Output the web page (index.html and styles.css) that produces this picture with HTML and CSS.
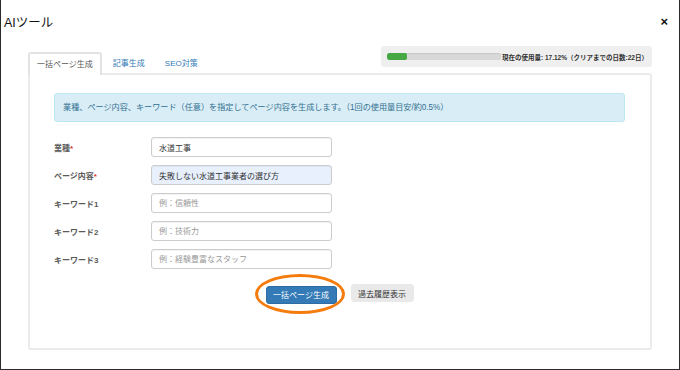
FILE: index.html
```html
<!DOCTYPE html>
<html lang="ja">
<head>
<meta charset="utf-8">
<title>AIツール</title>
<link rel="stylesheet" href="styles.css">
</head>
<body>
<div class="window">
  <div class="header">
    <div class="title">AIツール</div>
    <div class="close">×</div>
  </div>
  <div class="body">
    <div class="tabbar">
      <div class="tabs">
        <div class="tab active">一括ページ生成</div>
        <div class="tab">記事生成</div>
        <div class="tab">SEO対策</div>
      </div>
      <div class="usage">
        <div class="bar"><div class="fill" style="width:17.12%"></div></div>
        <div class="usage-text">現在の使用量: 17.12%（クリアまでの日数:22日）</div>
      </div>
    </div>
    <div class="panel">
      <div class="alert">業種、ページ内容、キーワード（任意）を指定してページ内容を生成します。（1回の使用量目安/約0.5%）</div>
      <div class="form">
        <label class="label">業種<span class="req">*</span></label>
        <input class="input" type="text" value="水道工事">
        <label class="label">ページ内容<span class="req">*</span></label>
        <input class="input filled" type="text" value="失敗しない水道工事業者の選び方">
        <label class="label">キーワード1</label>
        <input class="input" type="text" placeholder="例：信頼性">
        <label class="label">キーワード2</label>
        <input class="input" type="text" placeholder="例：技術力">
        <label class="label">キーワード3</label>
        <input class="input" type="text" placeholder="例：経験豊富なスタッフ">
      </div>
      <div class="actions">
        <div class="highlight-wrap">
          <button class="btn primary">一括ページ生成</button>
          <span class="ring"></span>
        </div>
        <button class="btn secondary">過去履歴表示</button>
      </div>
    </div>
  </div>
</div>
</body>
</html>
```

FILE: styles.css
```css
* { box-sizing: border-box; }
html, body { margin: 0; padding: 0; background: #fff; }
body {
  font-family: "Liberation Sans", "Noto Sans CJK JP", sans-serif;
}
.window {
  width: 680px;
  height: 370px;
  border: 1px solid #2b2b2b;
  border-top: none;
  background: #fff;
  display: flex;
  flex-direction: column;
}
.header {
  height: 42px;
  display: flex;
  align-items: center;
  justify-content: space-between;
  padding: 0 11px 0 3px;
}
.title { font-size: 12.5px; color: #111; }
.close { font-size: 13px; font-weight: bold; color: #111; line-height: 1; }
.body { padding: 0 27px; }
.tabbar {
  height: 31px;
  display: flex;
  justify-content: space-between;
  align-items: flex-end;
}
.tabs { display: flex; align-items: flex-end; }
.tab {
  font-size: 8px;
  line-height: 21px;
  height: 23px;
  padding: 0 8px;
  margin-right: 2px;
  color: #337ab7;
  border: 1px solid transparent;
  border-bottom: none;
  border-radius: 3px 3px 0 0;
  position: relative;
  top: 2px;
  background: transparent;
}
.tab.active {
  color: #555;
  background: #fff;
  border-color: #e3e3e3;
  border-width: 2px 2px 0 2px;
  padding: 0 7px;
  line-height: 21px;
}
.usage {
  align-self: flex-start;
  margin-top: 4px;
  height: 21px;
  width: 271px;
  background: #efefef;
  border-radius: 3px;
  display: flex;
  align-items: center;
  padding: 0 6px;
}
.bar {
  width: 114px;
  height: 7px;
  background: #d8d8d8;
  border-radius: 2px;
  box-shadow: inset 0 1px 1px rgba(0,0,0,0.08);
  overflow: hidden;
  flex: none;
}
.fill { height: 100%; background: #45a845; border-radius: 2px; }
.usage-text {
  font-size: 6.5px;
  font-weight: bold;
  color: #333;
  margin-left: 1px;
  white-space: nowrap;
}
.panel {
  height: 277px;
  border: 2px solid #ebebeb;
  border-radius: 0 3px 3px 3px;
  padding: 18px 25px 0 24px;
}
.alert {
  height: 29px;
  border: 1px solid #bce8f1;
  background: #d9edf7;
  color: #31708f;
  border-radius: 3px;
  font-size: 8.15px;
  line-height: 27px;
  padding: 0 8px;
  white-space: nowrap;
}
.form {
  margin-top: 15px;
  display: grid;
  grid-template-columns: 97px 181px;
  row-gap: 8px;
  align-items: center;
}
.label {
  font-size: 8px;
  font-weight: bold;
  color: #5a5a5a;
}
.req { color: #d9302c; }
.input {
  height: 20px;
  width: 181px;
  border: 1px solid #ccc;
  border-radius: 3px;
  padding: 0 7px;
  font-family: inherit;
  font-size: 8px;
  color: #333;
  background: #fff;
  box-shadow: inset 0 1px 1px rgba(0,0,0,0.05);
  outline: none;
}
.input::placeholder { color: #999; }
.input.filled { background: #e8f0fe; }
.actions {
  margin-top: 15px;
  display: flex;
  justify-content: center;
  gap: 14px;
}
.highlight-wrap { position: relative; }
.btn {
  height: 18px;
  font-family: inherit;
  font-size: 8px;
  border-radius: 3px;
  padding: 0 6px;
  cursor: pointer;
}
.primary {
  background: #337ab7;
  border: 1px solid #2e6da4;
  color: #fff;
  width: 71px;
}
.secondary {
  background: #e9e9e9;
  border: 1px solid #e9e9e9;
  color: #333;
  width: 63px;
}
.ring {
  position: absolute;
  left: -11px;
  right: -8px;
  top: -10px;
  bottom: -10px;
  border: 3px solid #f47b0c;
  border-radius: 50%;
  pointer-events: none;
}
```
